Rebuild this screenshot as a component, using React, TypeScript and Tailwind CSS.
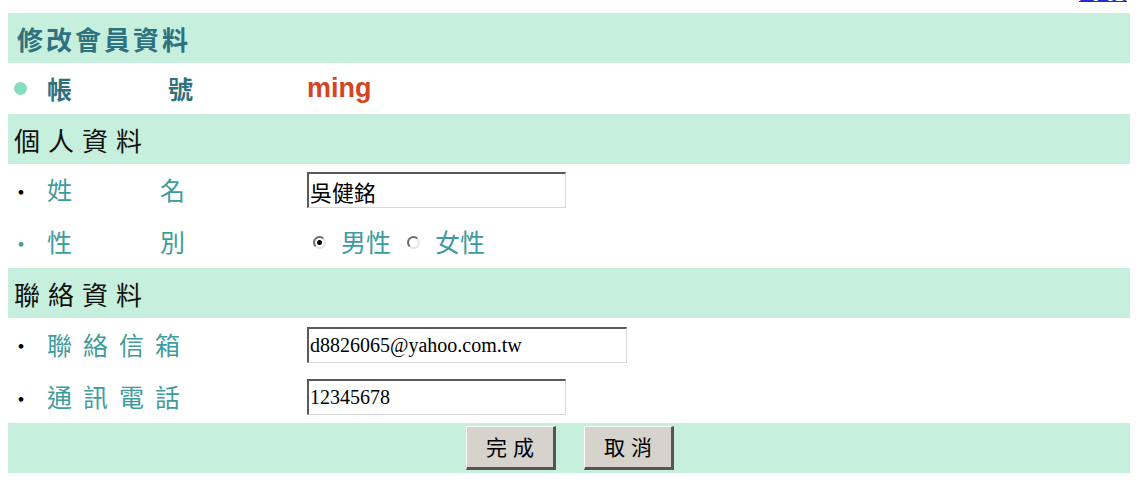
import type { ReactNode } from 'react';

const cjk = "font-['Noto_Sans_CJK_TC','Noto_Sans',sans-serif]";

function Band({ children, className = '' }: { children?: ReactNode; className?: string }) {
  return <div className={`h-[50px] bg-[#c6f0dd] flex items-center ${className}`}>{children}</div>;
}

// label characters spread across a fixed width, like a justified table cell
function Spread({ text, className = '' }: { text: string; className?: string }) {
  return (
    <span className={`flex justify-between ${className}`}>
      {text.split('').map((c, i) => (
        <span key={i}>{c}</span>
      ))}
    </span>
  );
}

function Field({ bullet, label, children, h = 'h-[52px]' }: { bullet: string; label: string; children: ReactNode; h?: string }) {
  const wide = label.length > 2;
  return (
    <div className={`${h} flex items-center`}>
      <span className={`w-[39px] pl-[2px] text-[22px] ${bullet}`}>·</span>
      <span className="w-[260px]">
        <Spread text={label} className={`text-[25px] text-[#3f9c9c] ${wide ? 'w-[133px]' : 'w-[138px]'}`} />
      </span>
      <div className="flex items-center">{children}</div>
    </div>
  );
}

function TextBox({ value, width, serif }: { value: string; width: string; serif?: boolean }) {
  return (
    <input
      readOnly
      value={value}
      className={`${width} h-[36px] bg-white border-t-2 border-l-2 border-b border-r border-t-[#5a5a5a] border-l-[#5a5a5a] border-b-[#d8d8d8] border-r-[#d8d8d8] px-[1px] text-black outline-none ${
        serif ? "font-['Liberation_Serif',serif] text-[20px]" : 'text-[22px]'
      }`}
    />
  );
}

function Radio({ checked }: { checked?: boolean }) {
  return (
    <span className="w-[13px] h-[13px] rounded-full bg-white border-2 border-t-[#6b6b6b] border-l-[#6b6b6b] border-b-[#e4e4e4] border-r-[#e4e4e4] flex items-center justify-center">
      {checked && <span className="w-[5px] h-[5px] rounded-full bg-black" />}
    </span>
  );
}

function Button({ children }: { children: ReactNode }) {
  return (
    <button className="w-[90px] h-[44px] bg-[#d6d3cd] border-t border-l border-t-white border-l-white border-b-[3px] border-r-[3px] border-b-[#555] border-r-[#555] text-[21px] tracking-[6px] pl-[6px] text-black">
      {children}
    </button>
  );
}

export default function App() {
  return (
    <div className={`w-[1143px] h-[483px] bg-white ${cjk}`}>
      <div className="h-[13px] pr-[16px] flex justify-end overflow-hidden">
        <a href="#" className="-mt-[17px] text-[16px] leading-[20px] text-[#2a2ad8] underline">
          回首頁
        </a>
      </div>

      <div className="ml-[8px] w-[1122px]">
        <Band className="h-[49px] pl-[9px]">
          <span className="text-[26px] font-bold text-[#2e7280] tracking-[3px]">修改會員資料</span>
        </Band>

        <div className="h-[51px] flex items-center">
          <span className="w-[39px] pl-[6px]">
            <span className="block w-[13px] h-[13px] rounded-full bg-[#86dcc0]" />
          </span>
          <span className="w-[260px]">
            <span className="w-[146px] flex justify-between text-[25px] font-bold text-[#2e7280]">
              <span>帳</span>
              <span>號</span>
            </span>
          </span>
          <span className="font-['Liberation_Sans',sans-serif] text-[27px] font-bold text-[#d5431f]">ming</span>
        </div>

        <Band className="pl-[6px]">
          <span className="text-[26px] text-[#111] tracking-[8px]">個人資料</span>
        </Band>

        <Field bullet="text-black" label="姓名">
          <TextBox value="吳健銘" width="w-[259px]" />
        </Field>

        <Field bullet="text-[#3f9c9c]" label="性別">
          <label className="flex items-center ml-[6px] text-[25px] text-[#3f9c9c]">
            <Radio checked />
            <span className="ml-[15px]">男性</span>
          </label>
          <label className="flex items-center ml-[16px] text-[25px] text-[#3f9c9c]">
            <Radio />
            <span className="ml-[15px]">女性</span>
          </label>
        </Field>

        <Band className="pl-[6px]">
          <span className="text-[26px] text-[#111] tracking-[8px]">聯絡資料</span>
        </Band>

        <Field bullet="text-black" label="聯絡信箱" h="h-[53px]">
          <TextBox value="d8826065@yahoo.com.tw" width="w-[320px]" serif />
        </Field>

        <Field bullet="text-black" label="通訊電話">
          <TextBox value="12345678" width="w-[259px]" serif />
        </Field>

        <Band className="justify-center gap-[28px] pl-[2px]">
          <Button>完成</Button>
          <Button>取消</Button>
        </Band>
      </div>
    </div>
  );
}
